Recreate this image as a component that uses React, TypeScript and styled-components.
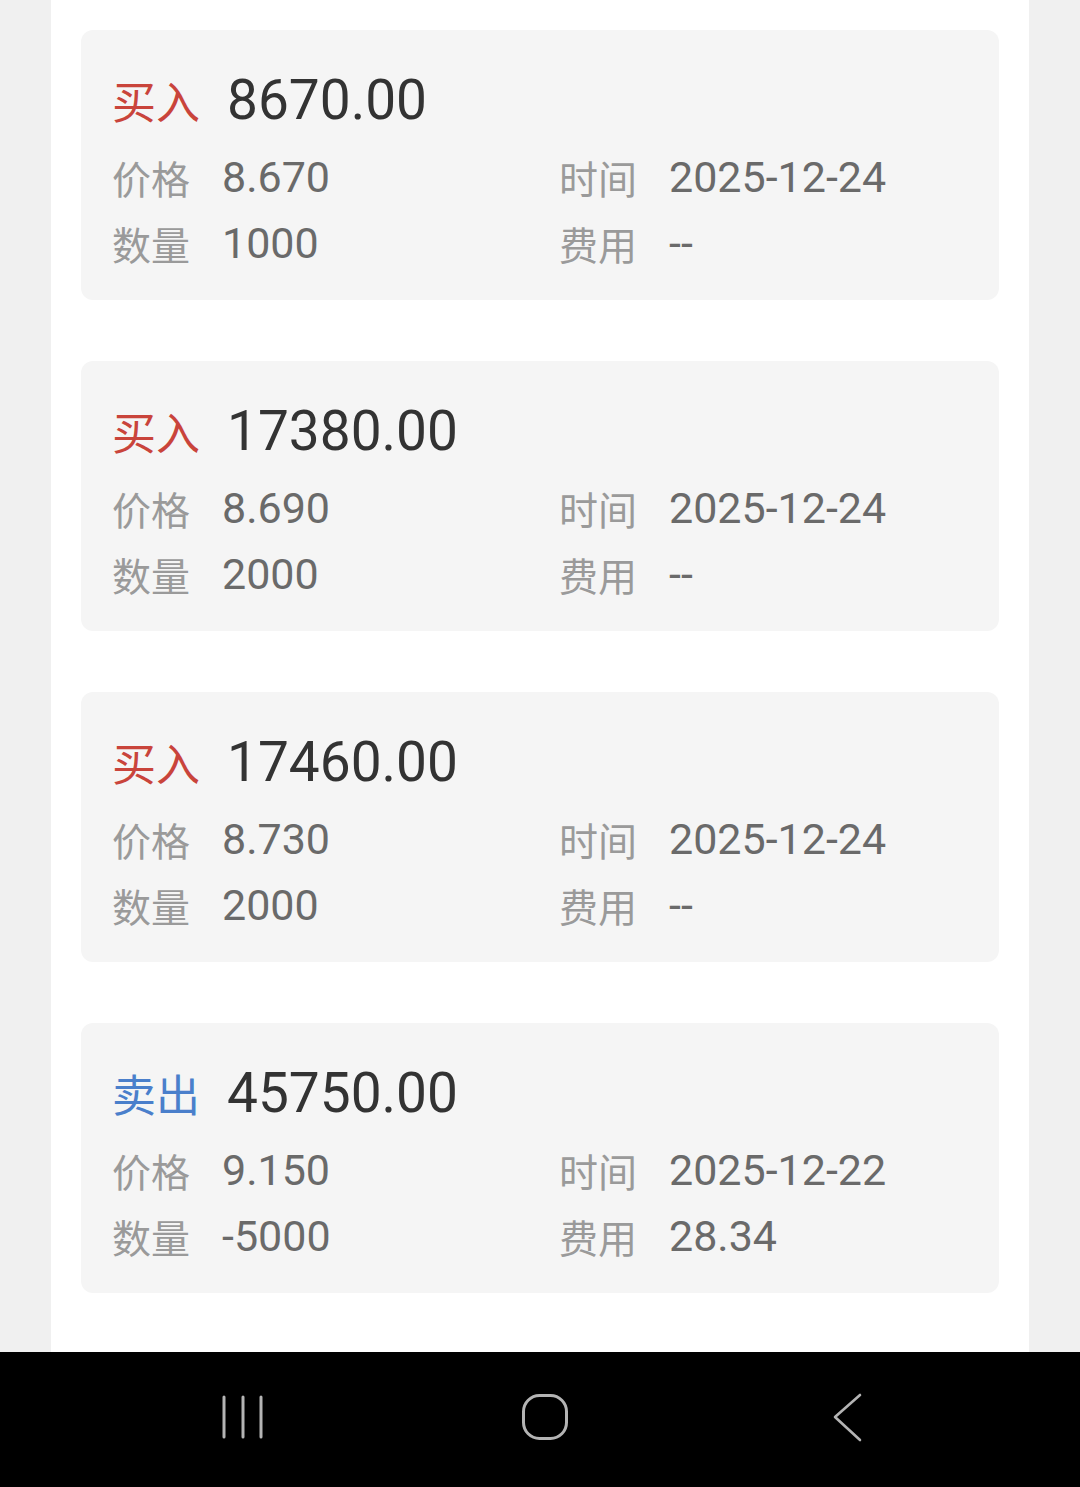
import styled, { createGlobalStyle } from 'styled-components'

type Trade = {
  side: 'buy' | 'sell'
  amount: string
  price: string
  time: string
  qty: string
  fee: string
}

const trades: Trade[] = [
  { side: 'buy', amount: '8670.00', price: '8.670', time: '2025-12-24', qty: '1000', fee: '--' },
  { side: 'buy', amount: '17380.00', price: '8.690', time: '2025-12-24', qty: '2000', fee: '--' },
  { side: 'buy', amount: '17460.00', price: '8.730', time: '2025-12-24', qty: '2000', fee: '--' },
  { side: 'sell', amount: '45750.00', price: '9.150', time: '2025-12-22', qty: '-5000', fee: '28.34' },
]

const App = () => {
  return (
    <>
      <GlobalStyle />
      <Screen>
        <Panel>
          {trades.map((t, i) => (
            <Card key={i}>
              <Title>
                <Side $side={t.side}>{t.side === 'buy' ? '买入' : '卖出'}</Side>
                <Amount>{t.amount}</Amount>
              </Title>
              <Fields>
                <Field>
                  <Label>价格</Label>
                  <Value>{t.price}</Value>
                </Field>
                <Field>
                  <Label>时间</Label>
                  <Value>{t.time}</Value>
                </Field>
                <Field>
                  <Label>数量</Label>
                  <Value>{t.qty}</Value>
                </Field>
                <Field>
                  <Label>费用</Label>
                  <Value>{t.fee}</Value>
                </Field>
              </Fields>
            </Card>
          ))}
        </Panel>
        <NavBar>
          <NavButton>
            <svg width='60' height='60' viewBox='0 0 60 60' fill='none' stroke='#b4b4b4' strokeWidth='3' strokeLinecap='round'>
              <line x1='11' y1='10' x2='11' y2='50' />
              <line x1='30' y1='10' x2='30' y2='50' />
              <line x1='48' y1='10' x2='48' y2='50' />
            </svg>
          </NavButton>
          <NavButton>
            <svg width='60' height='60' viewBox='0 0 60 60' fill='none' stroke='#b4b4b4' strokeWidth='3'>
              <rect x='8.5' y='8.5' width='43' height='43' rx='16' />
            </svg>
          </NavButton>
          <NavButton>
            <svg width='60' height='60' viewBox='0 0 60 60' fill='none' stroke='#b4b4b4' strokeWidth='2.6' strokeLinecap='round' strokeLinejoin='round'>
              <polyline points='43,8 18,30 43,53' />
            </svg>
          </NavButton>
        </NavBar>
      </Screen>
    </>
  )
}

const GlobalStyle = createGlobalStyle`
  body {
    margin: 0;
    background: #f0f0f0;
    font-family: Roboto, 'Noto Sans CJK SC', sans-serif;
  }
`

const Screen = styled.div`
  width: 1080px;
  height: 1487px;
  display: flex;
  flex-direction: column;
  overflow: hidden;
`

const Panel = styled.div`
  flex: 1;
  margin: 0 51px;
  padding: 30px 30px 0;
  background: #ffffff;
  display: flex;
  flex-direction: column;
  gap: 61px;
`

const Card = styled.div`
  height: 270px;
  box-sizing: border-box;
  padding: 40px 31px 0;
  background: #f5f5f5;
  border-radius: 12px;
`

const Title = styled.div`
  display: flex;
  align-items: center;
  gap: 27px;
  height: 60px;
`

const Side = styled.span<{ $side: 'buy' | 'sell' }>`
  font-family: 'Noto Sans CJK SC', sans-serif;
  font-size: 44px;
  color: ${(p) => (p.$side === 'buy' ? '#c9443b' : '#4a7fcb')};
`

const Amount = styled.span`
  font-size: 55px;
  color: #333333;
`

const Fields = styled.div`
  margin-top: 14px;
  display: grid;
  grid-template-columns: 447px 1fr;
`

const Field = styled.div`
  display: flex;
  align-items: center;
  gap: 32px;
  height: 66px;
`

const Label = styled.span`
  font-family: 'Noto Sans CJK SC', sans-serif;
  font-size: 39px;
  color: #9a9a9a;
`

const Value = styled.span`
  font-size: 43px;
  color: #6a6a6a;
`

const NavBar = styled.div`
  height: 135px;
  flex-shrink: 0;
  background: #000000;
  display: flex;
  align-items: center;
  gap: 242px;
  padding: 0 0 5px 213px;
  box-sizing: border-box;
`

const NavButton = styled.div`
  width: 60px;
  height: 60px;
  display: flex;
`

export default App
